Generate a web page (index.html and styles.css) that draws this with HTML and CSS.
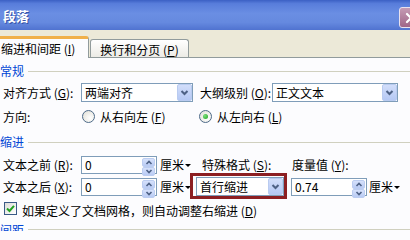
FILE: index.html
```html
<!DOCTYPE html>
<html lang="zh-CN">
<head>
<meta charset="utf-8">
<title>段落</title>
<link rel="stylesheet" href="styles.css">
</head>
<body>
<div class="dialog">
  <div class="titlebar">
    <span class="title">段落</span>
    <span class="close"><svg width="12" height="12" viewBox="0 0 12 12"><path d="M2 2 L10 10 M10 2 L2 10" stroke="#fff" stroke-width="2.2" stroke-linecap="round"/></svg></span>
  </div>
  <div class="tabstrip">
    <div class="tab active">缩进和间距 (<u>I</u>)</div>
    <div class="tab">换行和分页 (<u>P</u>)</div>
  </div>
  <div class="panel">
    <div class="group-head"><span>常规</span><i class="rule"></i></div>
    <div class="row r1">
      <span class="lbl">对齐方式 (<u>G</u>):</span>
      <div class="select s-align"><span class="val">两端对齐</span><span class="drop"><svg width="13" height="15" viewBox="0 0 13 15"><path d="M3.5 6 L6.5 9 L9.5 6" stroke="#4d6185" stroke-width="2" fill="none"/></svg></span></div>
      <span class="lbl2">大纲级别 (<u>O</u>):</span>
      <div class="select s-outline"><span class="val">正文文本</span><span class="drop"><svg width="13" height="15" viewBox="0 0 13 15"><path d="M3.5 6 L6.5 9 L9.5 6" stroke="#4d6185" stroke-width="2" fill="none"/></svg></span></div>
    </div>
    <div class="row r2">
      <span class="lbl">方向:</span>
      <span class="opt opt1"><i class="radio"></i>从右向左 (<u>F</u>)</span>
      <span class="opt"><i class="radio on"></i>从左向右 (<u>L</u>)</span>
    </div>
    <div class="group-head"><span>缩进</span><i class="rule"></i></div>
    <div class="row r3">
      <span class="lbl">文本之前 (<u>R</u>):</span>
      <div class="spin"><span class="val">0</span><span class="spinbtns"><i><svg width="10" height="7" viewBox="0 0 10 7"><path d="M2.5 5 L5 2.5 L7.5 5" stroke="#4d6185" stroke-width="1.6" fill="none"/></svg></i><i><svg width="10" height="7" viewBox="0 0 10 7"><path d="M2.5 2 L5 4.5 L7.5 2" stroke="#4d6185" stroke-width="1.6" fill="none"/></svg></i></span></div>
      <span class="unit u1">厘米<b class="tri"></b></span>
      <span class="lbl3">特殊格式 (<u>S</u>):</span>
      <span class="lbl4">度量值 (<u>Y</u>):</span>
    </div>
    <div class="row r4">
      <span class="lbl">文本之后 (<u>X</u>):</span>
      <div class="spin"><span class="val">0</span><span class="spinbtns"><i><svg width="10" height="7" viewBox="0 0 10 7"><path d="M2.5 5 L5 2.5 L7.5 5" stroke="#4d6185" stroke-width="1.6" fill="none"/></svg></i><i><svg width="10" height="7" viewBox="0 0 10 7"><path d="M2.5 2 L5 4.5 L7.5 2" stroke="#4d6185" stroke-width="1.6" fill="none"/></svg></i></span></div>
      <span class="unit u2">厘米<b class="tri"></b></span>
      <div class="select s-special hl"><span class="val">首行缩进</span><span class="drop"><svg width="13" height="15" viewBox="0 0 13 15"><path d="M3.5 6 L6.5 9 L9.5 6" stroke="#4d6185" stroke-width="2" fill="none"/></svg></span></div>
      <div class="spin s-measure"><span class="val">0.74</span><span class="spinbtns"><i><svg width="10" height="7" viewBox="0 0 10 7"><path d="M2.5 5 L5 2.5 L7.5 5" stroke="#4d6185" stroke-width="1.6" fill="none"/></svg></i><i><svg width="10" height="7" viewBox="0 0 10 7"><path d="M2.5 2 L5 4.5 L7.5 2" stroke="#4d6185" stroke-width="1.6" fill="none"/></svg></i></span></div>
      <span class="unit u3">厘米<b class="tri"></b></span>
    </div>
    <div class="row r5">
      <span class="check"><svg width="11" height="11" viewBox="0 0 11 11"><path d="M2 5.5 L4.5 8 L9 2.8" stroke="#21a121" stroke-width="2" fill="none"/></svg></span>
      <span class="checktext">如果定义了文档网格，则自动调整右缩进 (<u>D</u>)</span>
    </div>
    <div class="group-head last"><span>间距</span><i class="rule"></i></div>
  </div>
</div>
</body>
</html>
```

FILE: styles.css
```css
* { box-sizing: border-box; }
html, body { margin: 0; padding: 0; }
body {
  width: 410px;
  height: 231px;
  overflow: hidden;
  background: #fcfcfe;
  font-family: "Noto Sans CJK SC", "Noto Sans", sans-serif;
  font-size: 12px;
  color: #000;
}
u { text-decoration: underline; text-underline-offset: 1px; }

.titlebar {
  height: 30px;
  display: flex;
  align-items: center;
  justify-content: space-between;
  background: linear-gradient(180deg, #3b60c4 0, #587ddb 12%, #6a8ee3 45%, #6589df 75%, #5073d0 100%);
}
.title {
  color: #fff;
  font-weight: bold;
  font-size: 13px;
  margin-left: 3px;
  text-shadow: 1px 1px 0 #3552a8;
}
.close {
  align-self: flex-start;
  margin-top: 7px;
  margin-right: -12px;
  width: 23px;
  height: 21px;
  border: 1px solid #e9e2ee;
  border-radius: 3px;
  background: linear-gradient(#c59bb4, #9f6688);
  display: flex;
  align-items: center;
  justify-content: center;
}

.tabstrip {
  height: 27px;
  background: #ece9d8;
  display: flex;
  align-items: flex-end;
}
.tab {
  height: 18px;
  width: 99px;
  border: 1px solid #919b9c;
  border-bottom: none;
  border-radius: 3px 3px 0 0;
  background: linear-gradient(#ffffff, #ecebe6);
  display: flex;
  align-items: center;
  justify-content: center;
  padding-top: 1px;
}
.tab.active {
  position: relative;
  z-index: 1;
  width: 93px;
  height: 22px;
  margin-left: -4px;
  margin-right: 1px;
  margin-bottom: -1px;
  background: #fcfcfe;
  border-top: 3px solid #f0b04a;
  padding-top: 0;
  justify-content: flex-start;
  padding-left: 4px;
}

.panel {
  border-top: 1px solid #919b9c;
  background: #fcfcfe;
}

.group-head {
  height: 24px;
  display: flex;
  align-items: center;
  color: #0046d5;
}
.group-head span { margin-left: 0; }
.group-head .rule {
  flex: 1;
  height: 1px;
  margin-left: 4px;
  margin-top: 3px;
  background: #d0d0bf;
}
.group-head.last { height: 14px; align-items: flex-start; margin-top: -2px; }
.group-head.last .rule { margin-top: 8px; }

.row { display: flex; align-items: center; }
.r1 { height: 21px; }
.r2 { height: 26px; }
.r3 { height: 23px; }
.r4 { height: 21px; }
.r5 { height: 26px; }

.lbl { width: 81px; padding-left: 3px; white-space: nowrap; }
.lbl2 { width: 72px; margin-left: 7px; white-space: nowrap; }
.lbl3 { width: 90px; margin-left: 1px; white-space: nowrap; }
.lbl4 { white-space: nowrap; }

.select {
  height: 19px;
  border: 1px solid #7f9db9;
  background: #fff;
  display: flex;
  align-items: stretch;
}
.select .val { flex: 1; padding-left: 3px; line-height: 17px; white-space: nowrap; }
.drop {
  width: 15px;
  border: 1px solid #b9cbf0;
  border-radius: 2px;
  background: linear-gradient(#d2defa, #b5c8f4);
  display: flex;
  align-items: center;
  justify-content: center;
}
.s-align { width: 112px; }
.s-outline { width: 126px; }
.s-special { width: 88px; }

.hl { position: relative; }
.hl::after {
  content: "";
  position: absolute;
  left: -7px;
  right: -4px;
  top: -5px;
  bottom: -4px;
  border: 3px solid #8c1f22;
}

.opt { display: flex; align-items: center; white-space: nowrap; }
.opt1 { width: 117px; }
.radio {
  width: 13px;
  height: 13px;
  margin-left: 1px;
  margin-right: 5px;
  border: 1px solid #4d6a88;
  border-radius: 50%;
  background: radial-gradient(circle at 65% 65%, #ffffff 0, #ecebe5 60%, #dcdcd6 100%);
  display: flex;
  align-items: center;
  justify-content: center;
}
.radio.on::after {
  content: "";
  width: 5px;
  height: 5px;
  border-radius: 50%;
  background: radial-gradient(circle at 35% 35%, #7be07b, #21a121);
}

.spin {
  width: 76px;
  height: 18px;
  border: 1px solid #7f9db9;
  background: #fff;
  display: flex;
  align-items: stretch;
}
.spin .val { flex: 1; padding-left: 3px; line-height: 16px; }
.spinbtns {
  width: 13px;
  margin: 1px 1px 1px 0;
  display: flex;
  flex-direction: column;
}
.spinbtns i {
  flex: 1;
  border: 1px solid #bccdf1;
  border-radius: 2px;
  background: linear-gradient(#d6e1fb, #b9cbf4);
  display: flex;
  align-items: center;
  justify-content: center;
}
.s-measure { margin-left: 7px; }

.unit { display: flex; align-items: center; margin-left: 3px; white-space: nowrap; }
.u1 { width: 41px; }
.u2 { width: 36px; }
.u3 { margin-left: 2px; }
.tri {
  width: 0;
  height: 0;
  margin-left: 1px;
  margin-top: 2px;
  border-left: 3px solid transparent;
  border-right: 3px solid transparent;
  border-top: 3px solid #000;
}

.check {
  width: 13px;
  height: 13px;
  margin-left: 4px;
  margin-right: 5px;
  margin-top: -3px;
  border: 1px solid #3a5a86;
  background: linear-gradient(135deg, #dcdcd7, #ffffff);
  display: flex;
  align-items: center;
  justify-content: center;
}
.checktext { white-space: nowrap; }
```
